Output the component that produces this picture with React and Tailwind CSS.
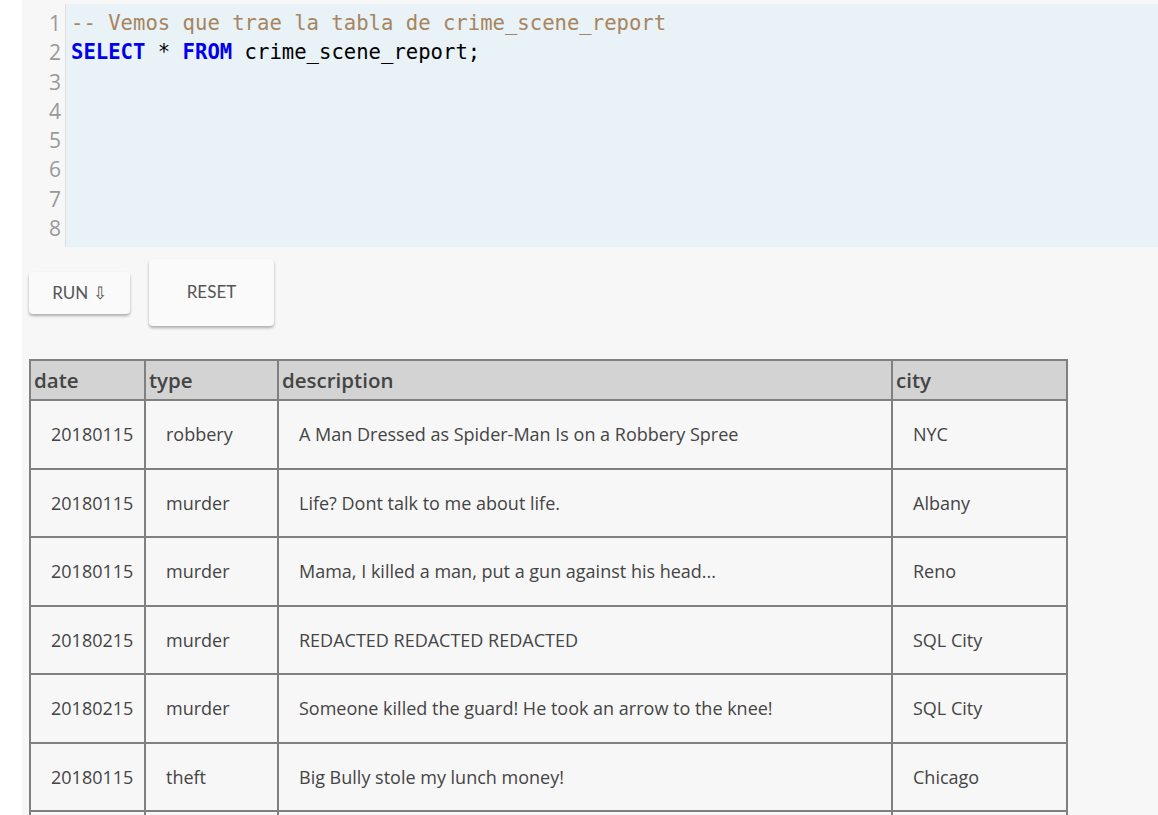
const rows = [
  ["20180115", "robbery", "A Man Dressed as Spider-Man Is on a Robbery Spree", "NYC"],
  ["20180115", "murder", "Life? Dont talk to me about life.", "Albany"],
  ["20180115", "murder", "Mama, I killed a man, put a gun against his head...", "Reno"],
  ["20180215", "murder", "REDACTED REDACTED REDACTED", "SQL City"],
  ["20180215", "murder", "Someone killed the guard! He took an arrow to the knee!", "SQL City"],
  ["20180115", "theft", "Big Bully stole my lunch money!", "Chicago"],
  ["20180115", "theft", "Big Bully stole my lunch money!", "Chicago"],
];

function Editor() {
  const lines = [1, 2, 3, 4, 5, 6, 7, 8];
  return (
    <div className="mt-[4px] flex bg-[#e9f2f6]">
      <div className="w-[44px] shrink-0 border-r border-[#dddddd] bg-[#f7f7f7] pt-[5px] pb-[4px] pr-[4px] text-right font-['Open_Sans',sans-serif] text-[21px] leading-[29.3px] text-[#999999]">
        {lines.map((n) => (
          <div key={n}>{n}</div>
        ))}
      </div>
      <div className="flex-1 pt-[5px] pl-[5px] font-['DejaVu_Sans_Mono',monospace] text-[20.6px] leading-[29.3px] text-black">
        <div className="whitespace-pre text-[#a68560]">-- Vemos que trae la tabla de crime_scene_report</div>
        <div className="whitespace-pre">
          <span className="font-bold text-[#0000ee]">SELECT</span> * <span className="font-bold text-[#0000ee]">FROM</span> crime_scene_report;
        </div>
      </div>
    </div>
  );
}

export default function App() {
  return (
    <div className="min-h-screen bg-white pl-[22px]">
      <div className="min-h-screen overflow-hidden bg-[#f7f7f7]">
        <Editor />
        <div className="mt-[12px] flex items-center gap-[19px] pl-[7px] font-['Lato',sans-serif] text-[17px] text-[#555555]">
          <button className="h-[42px] w-[101px] rounded-[4px] bg-[#fafafa] shadow-[0_2px_3px_rgba(0,0,0,0.3)]">
            RUN ⇩
          </button>
          <button className="h-[67px] w-[125px] rounded-[4px] bg-[#fafafa] pb-[3px] shadow-[0_2px_3px_rgba(0,0,0,0.3)]">
            RESET
          </button>
        </div>
        <div className="mt-[33px] pl-[7px]">
          <table className="w-[1039px] table-fixed border-collapse font-['Open_Sans',sans-serif] text-[#444444]">
            <colgroup>
              <col className="w-[115px]" />
              <col className="w-[133px]" />
              <col className="w-[614px]" />
              <col />
            </colgroup>
            <thead>
              <tr className="bg-[#d3d3d3] text-left text-[20.5px]">
                <th className="h-[40px] border-2 border-[#808080] px-[3px] font-semibold">date</th>
                <th className="border-2 border-[#808080] px-[3px] font-semibold">type</th>
                <th className="border-2 border-[#808080] px-[3px] font-semibold">description</th>
                <th className="border-2 border-[#808080] px-[3px] font-semibold">city</th>
              </tr>
            </thead>
            <tbody className="text-[18px]">
              {rows.map((r, i) => (
                <tr key={i} className="h-[68.5px]">
                  {r.map((c, j) => (
                    <td key={j} className="whitespace-nowrap border-2 border-[#808080] px-[20px]">
                      {c}
                    </td>
                  ))}
                </tr>
              ))}
            </tbody>
          </table>
        </div>
      </div>
    </div>
  );
}
